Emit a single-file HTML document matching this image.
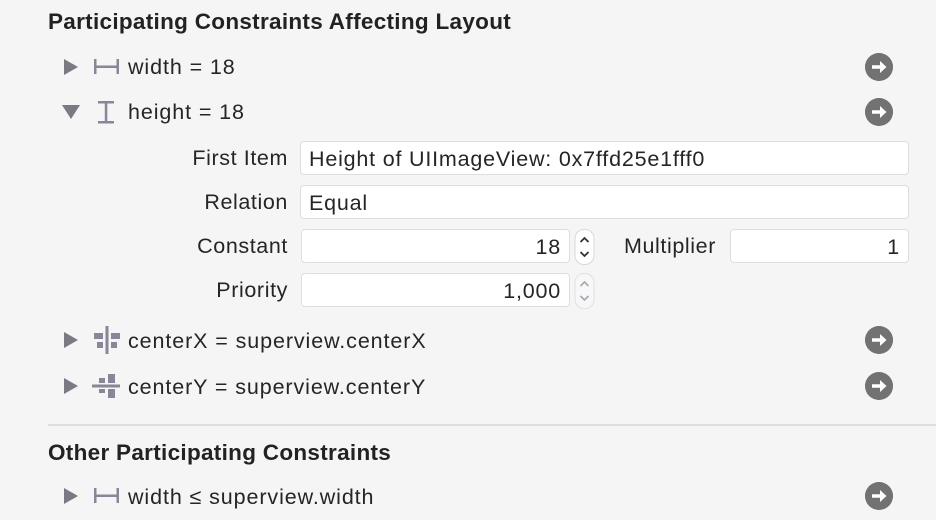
<!DOCTYPE html>
<html><head><meta charset="utf-8"><style>
html,body{margin:0;padding:0;}
body{width:936px;height:520px;background:#f5f5f5;position:relative;overflow:hidden;font-family:"Liberation Sans",sans-serif;color:#252525;}
.a{position:absolute;white-space:nowrap;}
.h{font-weight:bold;font-size:22.5px;letter-spacing:0.3px;color:#222;}
.t{font-size:21.5px;letter-spacing:0.9px;}
.lbl{font-size:21.5px;letter-spacing:0.6px;text-align:right;}
.box{position:absolute;background:#fff;border:1px solid #dedede;border-radius:4px;box-sizing:border-box;font-size:21.5px;letter-spacing:0.8px;line-height:34px;padding:0 8px;}
.go{position:absolute;width:28px;height:28px;border-radius:50%;background:#727272;}
.tri{position:absolute;}
</style></head><body>
<div class="a h" style="left:48px;top:9px;">Participating Constraints Affecting Layout</div>

<svg class="tri" style="left:63px;top:58px" width="16" height="18"><polygon points="1,1 15,9 1,17" fill="#7a7a85"/></svg>
<svg class="a" style="left:93px;top:57px" width="28" height="20"><rect x="1" y="2" width="2.5" height="15" fill="#8a8598"/><rect x="23.5" y="2" width="2.5" height="15" fill="#8a8598"/><rect x="1" y="8.5" width="25" height="2.5" fill="#8a8598"/></svg>
<div class="a t" style="left:128px;top:55px;">width = 18</div>
<svg class="go" style="left:865px;top:53px" width="28" height="28" viewBox="0 0 28 28"><circle cx="14" cy="14" r="14" fill="#727272"/><path d="M7 12.3h8v-4.3l6.5 6-6.5 6v-4.3h-8z" fill="#fff"/></svg>

<svg class="tri" style="left:61px;top:104px" width="20" height="16"><polygon points="1,1 19,1 10,15" fill="#7a7a85"/></svg>
<svg class="a" style="left:96px;top:100px" width="20" height="26"><rect x="2" y="1" width="16" height="2.5" fill="#8a8598"/><rect x="2" y="21" width="16" height="2.5" fill="#8a8598"/><rect x="8.8" y="1" width="2.5" height="22" fill="#8a8598"/></svg>
<div class="a t" style="left:128px;top:100px;">height = 18</div>
<svg class="go" style="left:865px;top:98px" width="28" height="28" viewBox="0 0 28 28"><circle cx="14" cy="14" r="14" fill="#727272"/><path d="M7 12.3h8v-4.3l6.5 6-6.5 6v-4.3h-8z" fill="#fff"/></svg>

<div class="a lbl" style="right:648px;top:146px;">First Item</div>
<div class="box" style="left:300px;top:141px;width:609px;height:34px;">Height of UIImageView: 0x7ffd25e1fff0</div>
<div class="a lbl" style="right:648px;top:190px;">Relation</div>
<div class="box" style="left:300px;top:185px;width:609px;height:34px;">Equal</div>
<div class="a lbl" style="right:648px;top:234px;">Constant</div>
<div class="box" style="left:301px;top:229px;width:269px;height:34px;text-align:right;">18</div>
<svg class="a" style="left:574px;top:229px" width="21" height="36"><rect x="1" y="0.5" width="19" height="35" rx="9" fill="#fff" stroke="#d8d8d8"/><path d="M6.5 13l4-4 4 4M6.5 23l4 4 4-4" fill="none" stroke="#333" stroke-width="1.8"/></svg>
<div class="a lbl" style="right:220px;top:234px;">Multiplier</div>
<div class="box" style="left:730px;top:229px;width:179px;height:34px;text-align:right;">1</div>
<div class="a lbl" style="right:648px;top:278px;">Priority</div>
<div class="box" style="left:301px;top:273px;width:269px;height:34px;text-align:right;">1,000</div>
<svg class="a" style="left:574px;top:273px" width="21" height="36"><rect x="1" y="0.5" width="19" height="35" rx="9" fill="#f7f7f7" stroke="#e0e0e0"/><path d="M6.5 13l4-4 4 4M6.5 23l4 4 4-4" fill="none" stroke="#a8a4b5" stroke-width="1.6"/></svg>

<svg class="tri" style="left:63px;top:331px" width="16" height="18"><polygon points="1,1 15,9 1,17" fill="#7a7a85"/></svg>
<svg class="a" style="left:94px;top:326px" width="26" height="28"><rect x="11.5" y="0" width="3" height="28" fill="#8a8598"/><rect x="0" y="7" width="9" height="6" fill="#8a8598"/><rect x="17" y="7" width="9" height="6" fill="#8a8598"/><rect x="3" y="16" width="6" height="6" fill="#8a8598"/><rect x="17" y="16" width="6" height="6" fill="#8a8598"/></svg>
<div class="a t" style="left:128px;top:329px;">centerX = superview.centerX</div>
<svg class="go" style="left:865px;top:326px" width="28" height="28" viewBox="0 0 28 28"><circle cx="14" cy="14" r="14" fill="#727272"/><path d="M7 12.3h8v-4.3l6.5 6-6.5 6v-4.3h-8z" fill="#fff"/></svg>

<svg class="tri" style="left:63px;top:377px" width="16" height="18"><polygon points="1,1 15,9 1,17" fill="#7a7a85"/></svg>
<svg class="a" style="left:92px;top:373px" width="28" height="26"><rect x="0" y="11.5" width="28" height="3" fill="#8a8598"/><rect x="7" y="5" width="6" height="5" fill="#8a8598"/><rect x="16" y="1" width="7" height="9" fill="#8a8598"/><rect x="7" y="16" width="6" height="4" fill="#8a8598"/><rect x="16" y="16" width="7" height="9" fill="#8a8598"/></svg>
<div class="a t" style="left:128px;top:375px;">centerY = superview.centerY</div>
<svg class="go" style="left:865px;top:372px" width="28" height="28" viewBox="0 0 28 28"><circle cx="14" cy="14" r="14" fill="#727272"/><path d="M7 12.3h8v-4.3l6.5 6-6.5 6v-4.3h-8z" fill="#fff"/></svg>

<div class="a" style="left:48px;top:424px;width:888px;height:2px;background:#dedede;"></div>
<div class="a h" style="left:48px;top:440px;">Other Participating Constraints</div>

<svg class="tri" style="left:63px;top:487px" width="16" height="18"><polygon points="1,1 15,9 1,17" fill="#7a7a85"/></svg>
<svg class="a" style="left:93px;top:486px" width="28" height="20"><rect x="1" y="2" width="2.5" height="15" fill="#8a8598"/><rect x="23.5" y="2" width="2.5" height="15" fill="#8a8598"/><rect x="1" y="8.5" width="25" height="2.5" fill="#8a8598"/></svg>
<div class="a t" style="left:128px;top:485px;">width ≤ superview.width</div>
<svg class="go" style="left:865px;top:482px" width="28" height="28" viewBox="0 0 28 28"><circle cx="14" cy="14" r="14" fill="#727272"/><path d="M7 12.3h8v-4.3l6.5 6-6.5 6v-4.3h-8z" fill="#fff"/></svg>
</body></html>
